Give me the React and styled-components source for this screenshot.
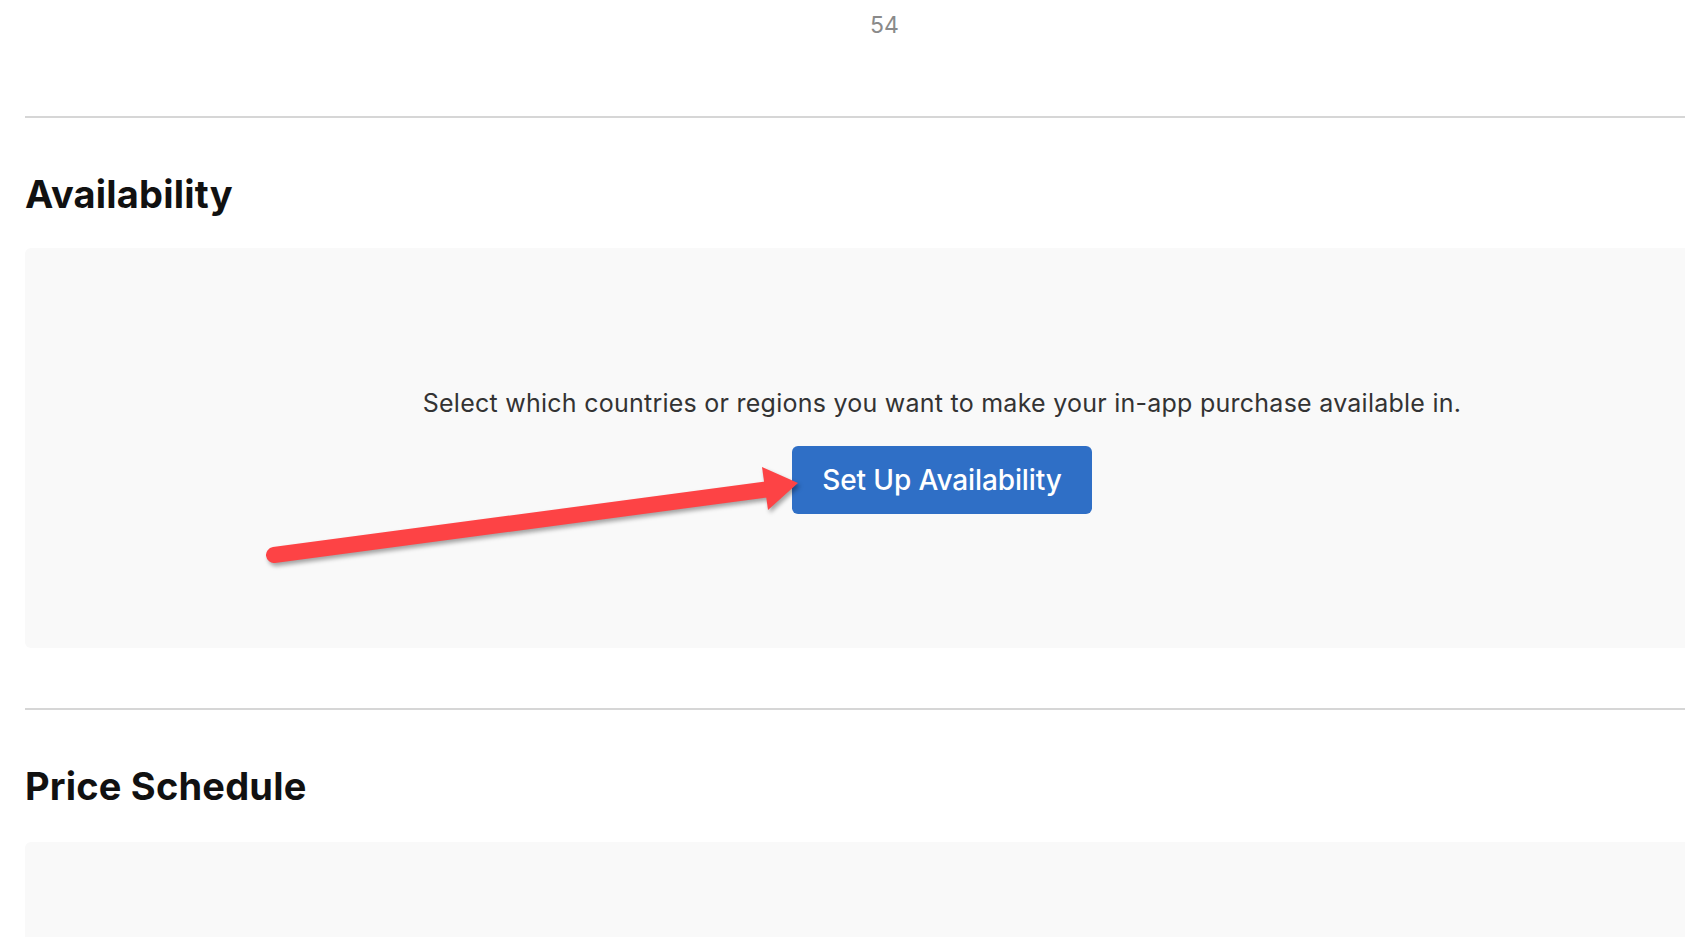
import React from 'react';
import styled, { createGlobalStyle } from 'styled-components';

const GlobalStyle = createGlobalStyle`
  html, body {
    margin: 0;
    padding: 0;
    background: #ffffff;
    overflow: hidden;
  }
  body {
    font-family: Inter, "Noto Sans", "Liberation Sans", sans-serif;
    -webkit-font-smoothing: antialiased;
  }
`;

const StyledPage = styled.main`
  width: 1834px;
  padding-left: 25px;
  color: #111;
`;

const StyledTopRow = styled.div`
  height: 116px;
  display: flex;
  align-items: flex-start;
`;

const StyledCount = styled.span`
  margin-left: 845px;
  margin-top: 11px;
  font-size: 23px;
  line-height: 28px;
  color: #8a8a8a;
`;

const StyledSection = styled.section`
  border-top: 2px solid #d6d6d6;
  padding-top: 52px;
  padding-bottom: ${({ bottom }) => bottom || 0}px;
`;

const StyledHeading = styled.h2`
  margin: 0 0 ${({ gap }) => gap || 30}px;
  font-size: 38px;
  line-height: 48px;
  font-weight: 700;
  letter-spacing: 0.2px;
  color: #111;
`;

const StyledPanel = styled.div`
  position: relative;
  box-sizing: border-box;
  height: ${({ height }) => height}px;
  padding-top: 5px;
  background: #f9f9f9;
  border-radius: 6px;
  display: flex;
  flex-direction: column;
  align-items: center;
  justify-content: center;
  gap: 28px;
`;

const StyledLead = styled.p`
  margin: 0;
  font-size: 25px;
  line-height: 30px;
  letter-spacing: 0.25px;
  color: #333;
`;

const StyledButton = styled.button`
  width: 300px;
  height: 68px;
  border: none;
  border-radius: 6px;
  background: #2f6fc6;
  color: #fff;
  font-family: inherit;
  font-size: 28px;
  font-weight: 500;
  letter-spacing: -0.1px;
  cursor: pointer;
`;

const StyledArrow = styled.svg`
  position: absolute;
  left: 0;
  top: 0;
  width: 800px;
  height: 340px;
  pointer-events: none;
  filter: drop-shadow(2px 3px 2px rgba(0, 0, 0, 0.35));
`;

const Arrow = () => (
  <StyledArrow viewBox="0 0 800 340">
    <line x1="249" y1="307" x2="745" y2="241" stroke="#fd4345" strokeWidth="16" strokeLinecap="round" />
    <polygon points="737,219 773,235 743,262" fill="#fd4345" />
  </StyledArrow>
);

const App = () => {
  return (
    <>
      <GlobalStyle />
      <StyledPage>
        <StyledTopRow>
          <StyledCount>54</StyledCount>
        </StyledTopRow>
        <StyledSection bottom={60}>
          <StyledHeading>Availability</StyledHeading>
          <StyledPanel height={400}>
            <StyledLead>
              Select which countries or regions you want to make your in-app purchase available in.
            </StyledLead>
            <StyledButton type="button">Set Up Availability</StyledButton>
            <Arrow />
          </StyledPanel>
        </StyledSection>
        <StyledSection>
          <StyledHeading gap={32}>Price Schedule</StyledHeading>
          <StyledPanel height={200} />
        </StyledSection>
      </StyledPage>
    </>
  );
};

export default App;
